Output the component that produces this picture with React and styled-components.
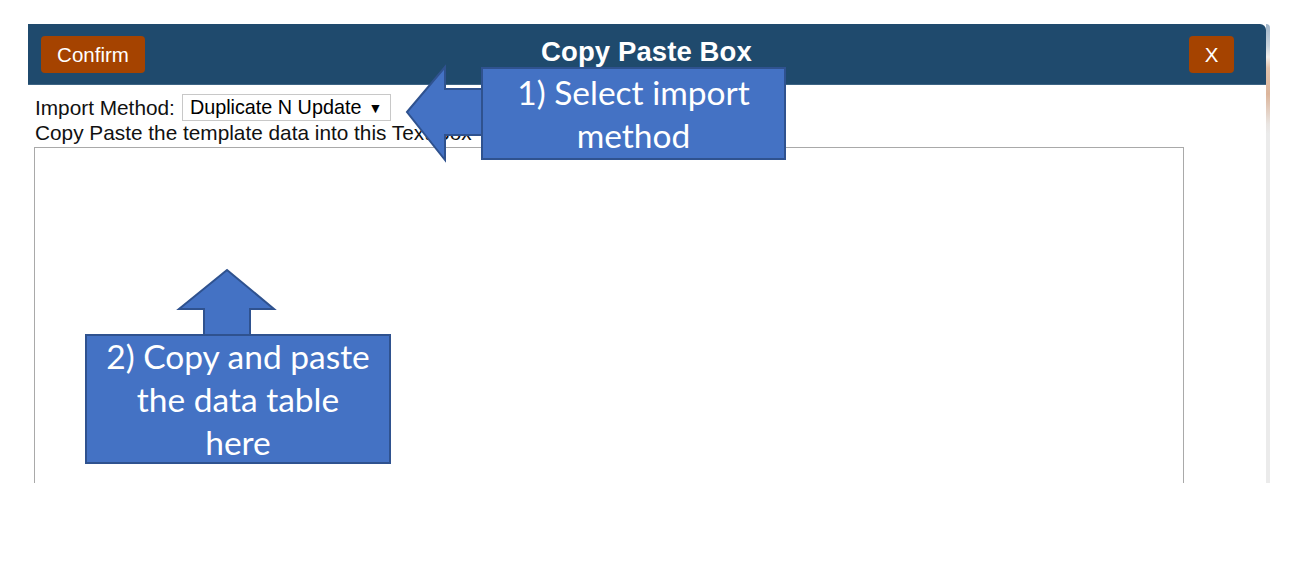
import React from "react";
import styled, { createGlobalStyle } from "styled-components";

const GlobalStyle = createGlobalStyle`
  html, body { margin: 0; padding: 0; background: #ffffff; }
  body { font-family: "Liberation Sans", Arial, sans-serif; }
`;

const Page = styled.div`
  position: relative;
  width: 1313px;
  height: 562px;
  padding: 24px 0 0 28px;
  box-sizing: border-box;
  display: flex;
  align-items: flex-start;
`;

const Modal = styled.div`
  width: 1238px;
  height: 459px;
  overflow: hidden;
  background: #ffffff;
  border-top-right-radius: 6px;
  display: flex;
  flex-direction: column;
`;

const EdgeStrip = styled.div`
  width: 4px;
  height: 459px;
  border-top-right-radius: 4px;
  background: linear-gradient(
    to bottom,
    #9fb4c8 0px,
    #c9d3dc 22px,
    #f3efec 33px,
    #e2c3ad 44px,
    #dcb59b 70px,
    #e9e5e2 100px,
    #ebebeb 110px,
    #ebebeb 100%
  );
`;

const Header = styled.div`
  height: 61px;
  flex: none;
  background: #1f4a6d;
  display: grid;
  grid-template-columns: 1fr auto 1fr;
  align-items: center;
  padding: 0 32px 0 13px;
  box-shadow: inset 0 -1px 0 #3d6484;
`;

const HeaderButton = styled.button`
  justify-self: ${(p) => (p.$end ? "end" : "start")};
  height: 37px;
  min-width: ${(p) => (p.$end ? "45px" : "104px")};
  padding: 0 ${(p) => (p.$end ? "0" : "15px")};
  border: none;
  border-radius: 4px;
  background: #a54300;
  color: #ffffff;
  font-family: "Liberation Sans", Arial, sans-serif;
  font-size: 20.5px;
  line-height: 37px;
  cursor: pointer;
`;

const Title = styled.h1`
  margin: 0 0 5px 0;
  padding-left: 18px;
  color: #ffffff;
  font-family: "Liberation Sans", Arial, sans-serif;
  font-weight: bold;
  font-size: 27.5px;
  letter-spacing: 0.1px;
`;

const Body = styled.div`
  padding: 9px 0 0 6px;
  color: #111111;
  font-family: "Liberation Sans", Arial, sans-serif;
  font-size: 20.8px;
`;

const MethodRow = styled.div`
  display: flex;
  align-items: center;
  gap: 7px;
  padding-left: 1px;
`;

const SelectBox = styled.div`
  height: 27px;
  box-sizing: border-box;
  border: 1px solid #c8c8c8;
  background: #ffffff;
  display: flex;
  align-items: center;
  gap: 7px;
  padding: 0 8px 0 7px;
  font-size: 19.8px;
  color: #000;
`;

const Caret = styled.span`
  font-size: 14px;
  line-height: 1;
`;

const Hint = styled.div`
  margin-top: 1px;
  padding-left: 1px;
  line-height: 22px;
`;

const PasteArea = styled.textarea`
  display: block;
  margin-top: 3px;
  width: 1150px;
  height: 420px;
  box-sizing: border-box;
  border: 1px solid #a9a9a9;
  resize: none;
  outline: none;
  background: #fff;
`;

const Callout = styled.div`
  position: absolute;
  left: ${(p) => p.$x}px;
  top: ${(p) => p.$y}px;
  width: ${(p) => p.$w}px;
  height: ${(p) => p.$h}px;
  box-sizing: border-box;
  background: #4472c4;
  border: 2px solid #2f528f;
  color: #ffffff;
  font-family: Lato, "Open Sans", sans-serif;
  font-size: 33.5px;
  line-height: 43px;
  text-align: center;
  display: flex;
  flex-direction: column;
  justify-content: center;
`;

const ArrowSvg = styled.svg`
  position: absolute;
  left: ${(p) => p.$x}px;
  top: ${(p) => p.$y}px;
  overflow: visible;
`;

export default function App() {
  return (
    <>
      <GlobalStyle />
      <Page>
        <Modal>
          <Header>
            <HeaderButton>Confirm</HeaderButton>
            <Title>Copy Paste Box</Title>
            <HeaderButton $end>X</HeaderButton>
          </Header>
          <Body>
            <MethodRow>
              <span>Import Method:</span>
              <SelectBox>
                <span>Duplicate N Update</span>
                <Caret>▼</Caret>
              </SelectBox>
            </MethodRow>
            <Hint>Copy Paste the template data into this Text Box</Hint>
            <PasteArea />
          </Body>
        </Modal>
        <EdgeStrip />

        <ArrowSvg $x={404} $y={64} width="80" height="100" viewBox="0 0 80 100">
          <polygon
            points="3,48 41,3 41,25 79,25 79,71 41,71 41,96"
            fill="#4472c4"
            stroke="#2f528f"
            strokeWidth="2"
          />
        </ArrowSvg>
        <Callout $x={481} $y={67} $w={305} $h={93}>
          <div>1) Select import</div>
          <div>method</div>
        </Callout>

        <ArrowSvg $x={176} $y={268} width="100" height="68" viewBox="0 0 100 68">
          <polygon
            points="51,2 98,41 74,41 74,68 28,68 28,41 3,41"
            fill="#4472c4"
            stroke="#2f528f"
            strokeWidth="2"
          />
        </ArrowSvg>
        <Callout $x={85} $y={334} $w={306} $h={130}>
          <div>2) Copy and paste</div>
          <div>the data table</div>
          <div>here</div>
        </Callout>
      </Page>
    </>
  );
}
